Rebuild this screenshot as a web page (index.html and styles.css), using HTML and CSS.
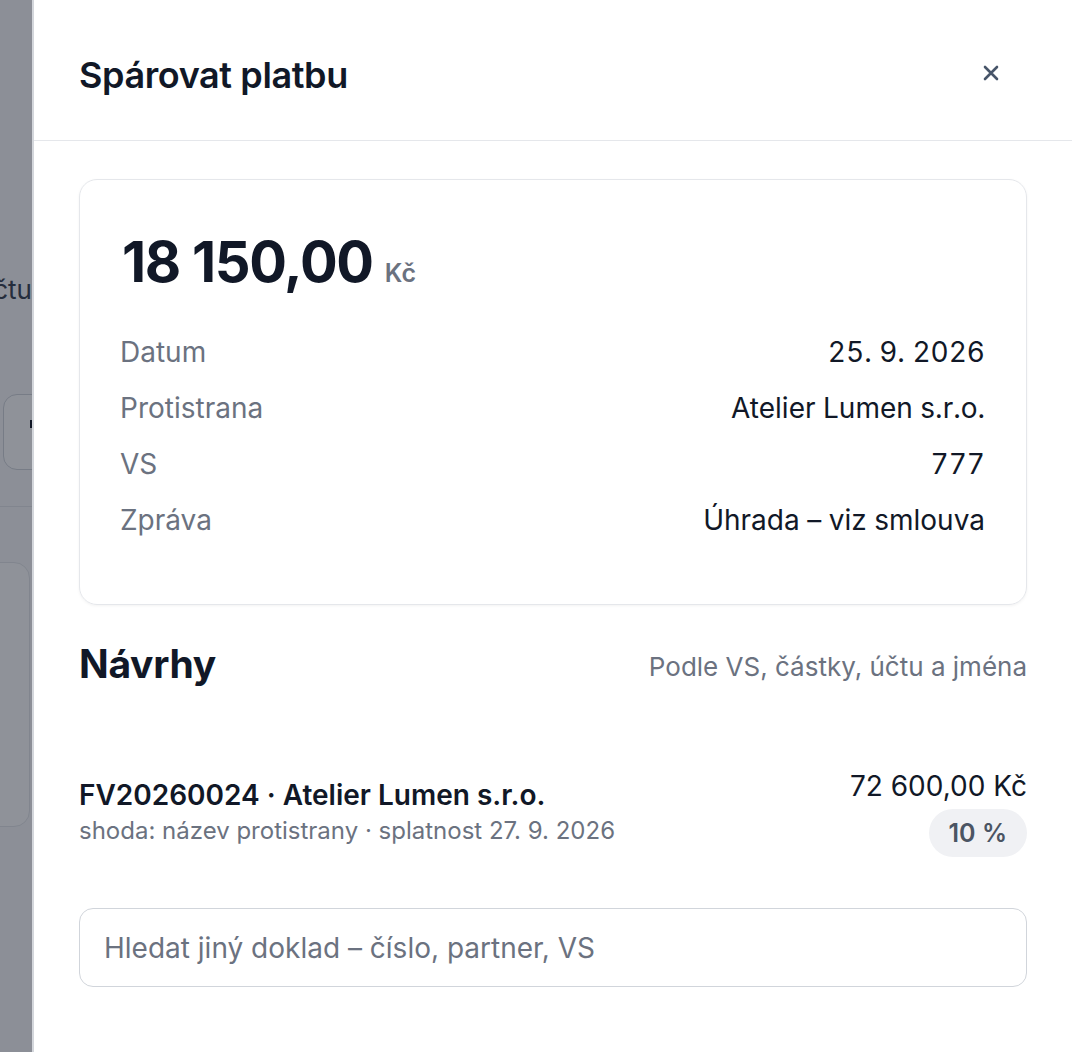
FILE: index.html
```html
<!DOCTYPE html>
<html lang="cs">
<head>
<meta charset="utf-8">
<title>Spárovat platbu</title>
<link rel="stylesheet" href="styles.css">
</head>
<body>
<div class="app">
  <div class="backdrop">
    <div class="bg-page">
      <div class="bg-text">účtu</div>
      <div class="bg-button"><span class="bg-glyph"></span></div>
      <div class="bg-rule"></div>
      <div class="bg-card"></div>
    </div>
    <div class="scrim"></div>
  </div>
  <aside class="drawer">
    <header class="drawer-head">
      <h1 class="drawer-title">Spárovat platbu</h1>
      <button class="close" aria-label="Zavřít">
        <svg viewBox="0 0 24 24" width="24" height="24"><path d="M6 6l12 12M18 6L6 18" stroke="#475569" stroke-width="2.6" stroke-linecap="round" fill="none"/></svg>
      </button>
    </header>
    <div class="drawer-body">
      <section class="pay-card">
        <div class="amount"><span class="amount-num">18 150,00</span><span class="amount-cur">Kč</span></div>
        <dl class="facts">
          <div class="fact"><dt>Datum</dt><dd>25. 9. 2026</dd></div>
          <div class="fact"><dt>Protistrana</dt><dd>Atelier Lumen s.r.o.</dd></div>
          <div class="fact"><dt>VS</dt><dd>777</dd></div>
          <div class="fact"><dt>Zpráva</dt><dd>Úhrada – viz smlouva</dd></div>
        </dl>
      </section>
      <div class="sugg-head">
        <h2 class="sugg-title">Návrhy</h2>
        <span class="sugg-note">Podle VS, částky, účtu a jména</span>
      </div>
      <div class="sugg">
        <div class="sugg-main">
          <div class="sugg-name">FV20260024 · Atelier Lumen s.r.o.</div>
          <div class="sugg-meta">shoda: název protistrany · splatnost 27. 9. 2026</div>
        </div>
        <div class="sugg-side">
          <div class="sugg-amount">72 600,00 Kč</div>
          <span class="badge">10 %</span>
        </div>
      </div>
      <input class="search" type="text" placeholder="Hledat jiný doklad – číslo, partner, VS">
    </div>
  </aside>
</div>
</body>
</html>
```
FILE: styles.css
```css
* { box-sizing: border-box; }
html, body { margin: 0; padding: 0; height: 100%; }
body { font-family: Inter, "Noto Sans", sans-serif; color: #111827; background: #fff; overflow: hidden; }

.app { display: grid; grid-template-columns: 32px 1fr; height: 1052px; }

.backdrop { position: relative; overflow: hidden; background: #f9fafb; }
.bg-page { width: 32px; display: flex; flex-direction: column; align-items: flex-end; }
.bg-text { margin-top: 272px; font-size: 26px; color: #374151; white-space: nowrap; line-height: 36px; }
.bg-button { margin-top: 86px; align-self: flex-start; margin-left: 3px; width: 60px; height: 76px; border: 1.5px solid #d1d5db; border-radius: 14px; background: #fff; }
.bg-glyph { display: block; width: 2px; height: 8px; background: #111827; margin: 25px 0 0 26px; }
.bg-rule { margin-top: 36px; width: 32px; height: 1px; background: #e5e7eb; }
.bg-card { margin-top: 55px; align-self: flex-start; margin-left: -40px; width: 70px; height: 265px; border: 1.5px solid #e5e7eb; border-radius: 16px; background: #fff; }
.scrim { position: absolute; inset: 0; background: rgba(17, 24, 39, 0.47); }

.drawer { background: #fff; border-left: 2px solid #d3d6db; display: flex; flex-direction: column; }
.drawer-head { height: 141px; border-bottom: 1.5px solid #e5e7eb; display: flex; align-items: center; justify-content: space-between; padding: 0 69px 0 45px; }
.drawer-title { margin: 0; font-size: 36px; font-weight: 600; letter-spacing: -0.4px; line-height: 1; padding-top: 10px; }
.close { border: 0; background: none; padding: 0; width: 24px; height: 24px; display: flex; cursor: pointer; margin-top: 6px; }

.drawer-body { padding: 38px 45px 0 45px; display: flex; flex-direction: column; }

.pay-card { border: 1.5px solid #e5e7eb; border-radius: 18px; padding: 48px 41px 56px 40px; box-shadow: 0 1px 3px rgba(0,0,0,0.05); }
.amount { display: flex; align-items: baseline; gap: 12px; line-height: 68px; padding-left: 2px; }
.amount-num { font-size: 56px; font-weight: 700; letter-spacing: -1.3px; }
.amount-cur { font-size: 25px; font-weight: 600; color: #6b7280; }
.facts { margin: 17px 0 0; }
.fact { display: flex; justify-content: space-between; align-items: center; height: 56px; font-size: 28px; }
.fact dt { color: #6b7280; }
.fact dd { margin: 0; color: #111827; font-variant-numeric: tabular-nums; }

.sugg-head { display: flex; justify-content: space-between; align-items: center; margin-top: 31px; height: 54px; }
.sugg-title { margin: 0; font-size: 39px; font-weight: 700; letter-spacing: -0.3px; }
.sugg-note { font-size: 26px; color: #6b7280; padding-top: 6px; }

.sugg { display: flex; justify-content: space-between; align-items: flex-start; margin-top: 77px; }
.sugg-name { font-size: 28px; font-weight: 600; line-height: 38px; margin-top: 9px; }
.sugg-meta { font-size: 24px; color: #6b7280; line-height: 32px; margin-top: 1px; }
.sugg-side { display: flex; flex-direction: column; align-items: flex-end; }
.sugg-amount { font-size: 28px; line-height: 38px; }
.badge { margin-top: 4px; background: #f0f1f4; color: #4b5563; border-radius: 25px; font-size: 25px; font-weight: 600; line-height: 48px; padding: 0 20px; }

.search { margin-top: 51px; height: 79px; width: 100%; border: 1.5px solid #d1d5db; border-radius: 14px; padding: 0 24px; font-family: Inter, "Noto Sans", sans-serif; font-size: 28px; color: #111827; background: #fff; outline: none; }
.search::placeholder { color: #6b7280; }
```
